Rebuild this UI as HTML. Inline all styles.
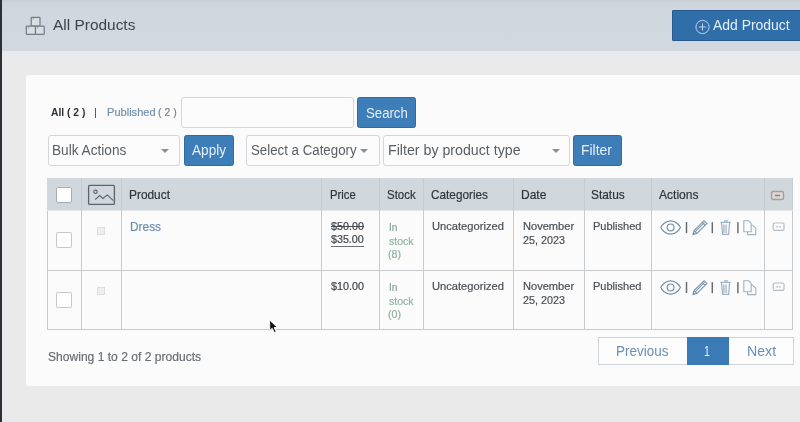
<!DOCTYPE html>
<html><head><meta charset="utf-8">
<style>
*{box-sizing:border-box;margin:0;padding:0}
html,body{width:800px;height:422px;overflow:hidden;background:#e9eae9;font-family:"Liberation Sans",sans-serif}
.a{position:absolute}
.t{position:absolute;white-space:nowrap;line-height:1;transform-origin:0 0}
#edge{left:-4px;top:-4px;width:6px;height:430px;background:#2c3034}
#hdr{left:2px;top:-4px;width:802px;height:55.4px;background:linear-gradient(#c8cdd6 0,#c8cdd6 4px,#cdd3db 6px,#d0d7de 14px,#d1d8df 55px)}
#band{left:2px;top:51.4px;width:802px;height:6.1px;background:#e7ebee}
#card{left:25.5px;top:75.3px;width:800px;height:310.4px;background:#fbfbfc;border-radius:3px}
.btn{position:absolute;background:#3d7db8;border:1px solid #336b9f;border-radius:2.5px;color:#e8f0f8}
.sel{position:absolute;background:#fcfcfc;border:1px solid #d4d6d8;border-radius:3px;color:#555b60}
.arr{position:absolute;width:0;height:0;border-left:4px solid transparent;border-right:4px solid transparent;border-top:4px solid #8a8f94}
.vl{position:absolute;width:1px;background:#c7cacd}
.hl{position:absolute;height:1px;background:#c7cacd}
.cb{position:absolute;width:16px;height:16px;background:#fff;border:1.5px solid #b9bcc0;border-radius:2px}
.th{position:absolute;font-size:12px;color:#3c434a;line-height:1}
.td{position:absolute;font-size:11.3px;color:#3f454b;line-height:14px;white-space:nowrap}
.bar{position:absolute;width:1.6px;height:11px;background:#5e6368}
</style></head><body><div id="root" style="position:absolute;left:-6px;top:-6px;width:812px;height:434px;filter:blur(0.4px)"><div style="position:absolute;left:6px;top:6px;width:800px;height:422px">
<div id="edge" class="a"></div>
<div id="hdr" class="a"></div>
<div id="band" class="a"></div>
<!-- boxes icon -->
<svg class="a" style="left:24px;top:15px" width="24" height="22" viewBox="0 0 24 22">
  <g fill="#d9dee3" stroke="#747b82" stroke-width="1.2">
    <rect x="7.2" y="2.4" width="8.8" height="8.8" rx="0.6"/>
    <rect x="2.3" y="11.2" width="9.2" height="8.2" rx="0.6"/>
    <rect x="11.5" y="11.2" width="8.7" height="8.2" rx="0.6"/>
  </g>
  <path d="M8.6 4.6 L10.2 3.2 M3.7 13.4 L5.3 12 M12.9 13.4 L14.5 12" stroke="#8a9096" stroke-width="0.9"/>
</svg>
<!-- add product button -->
<div class="a" style="left:672px;top:9.5px;width:140px;height:31px;background:#2f6ea9;border:1px solid #27598c;border-radius:1px"></div>
<svg class="a" style="left:694px;top:19px" width="17" height="17" viewBox="0 0 17 17">
  <g fill="none" stroke="#c9dcef" stroke-width="0.9"><circle cx="8.5" cy="8" r="6.6"/><path d="M8.5 4.4v7.2M4.9 8h7.2"/></g>
</svg>

<div id="card" class="a"></div>

<!-- top links -->
<div class="sel" style="left:181px;top:97px;width:173px;height:31px"></div>
<div class="btn" style="left:357px;top:97px;width:59px;height:31px"></div>

<!-- filter row -->
<div class="sel" style="left:47.5px;top:134.5px;width:132px;height:31px"></div>
<div class="arr" style="left:160.5px;top:148.5px"></div>
<div class="btn" style="left:183.5px;top:134.5px;width:50.5px;height:31px"></div>
<div class="sel" style="left:246px;top:134.5px;width:133.5px;height:31px"></div>
<div class="arr" style="left:360px;top:148.5px"></div>
<div class="sel" style="left:383px;top:134.5px;width:187px;height:31px"></div>
<div class="arr" style="left:551.5px;top:148.5px"></div>
<div class="btn" style="left:573px;top:134.5px;width:48.5px;height:31px"></div>

<!-- table -->
<div class="a" style="left:47px;top:210px;width:746px;height:120px;background:#fbfbfb;border:1px solid #c7cacd"></div>
<div class="a" style="left:47px;top:178px;width:746px;height:32.5px;background:#d1d8dd;border-bottom:1px solid #e4e8eb"></div>
<div class="hl" style="left:47px;top:270px;width:746px"></div>
<div class="vl" style="left:81px;top:210px;height:120px"></div>
<div class="vl" style="left:81px;top:178px;height:32px;background:#c6cdd2"></div>
<div class="vl" style="left:121px;top:210px;height:120px"></div>
<div class="vl" style="left:121px;top:178px;height:32px;background:#c6cdd2"></div>
<div class="vl" style="left:321px;top:210px;height:120px"></div>
<div class="vl" style="left:321px;top:178px;height:32px;background:#c6cdd2"></div>
<div class="vl" style="left:379px;top:210px;height:120px"></div>
<div class="vl" style="left:379px;top:178px;height:32px;background:#c6cdd2"></div>
<div class="vl" style="left:423px;top:210px;height:120px"></div>
<div class="vl" style="left:423px;top:178px;height:32px;background:#c6cdd2"></div>
<div class="vl" style="left:513px;top:210px;height:120px"></div>
<div class="vl" style="left:513px;top:178px;height:32px;background:#c6cdd2"></div>
<div class="vl" style="left:584px;top:210px;height:120px"></div>
<div class="vl" style="left:584px;top:178px;height:32px;background:#c6cdd2"></div>
<div class="vl" style="left:651px;top:210px;height:120px"></div>
<div class="vl" style="left:651px;top:178px;height:32px;background:#c6cdd2"></div>
<div class="vl" style="left:764px;top:210px;height:120px"></div>
<div class="vl" style="left:764px;top:178px;height:32px;background:#c6cdd2"></div>
<div class="vl" style="left:792px;top:178px;height:32px;background:#c6cdd2"></div>

<div class="cb" style="left:56.3px;top:187px;border-color:#a9adb1"></div>
<svg class="a" style="left:87px;top:184px" width="29" height="22" viewBox="0 0 29 22">
  <g fill="none" stroke="#5c636a">
    <rect x="1.6" y="1.4" width="25.8" height="19" rx="1" stroke-width="1.3"/>
    <circle cx="8.5" cy="7.8" r="1.7" stroke-width="1.1"/>
    <path d="M8 15.7 L12.9 11.6 L15.9 14.5 L20.3 10.9 L26.4 16.6" stroke-width="1.1"/>
  </g>
</svg>
<svg class="a" style="left:770px;top:190px" width="15" height="11" viewBox="0 0 15 11">
  <rect x="1.5" y="1.5" width="12" height="8" rx="1.5" fill="#ddd8d8" stroke="#a89c9c" stroke-width="1.4"/>
  <path d="M5 5.5h5" stroke="#857b7b" stroke-width="1.4"/>
</svg>

<!-- row 1 -->
<div class="cb" style="left:56.2px;top:232.3px;border-color:#c6c8ca"></div>
<div class="a" style="left:97.4px;top:227.1px;width:8px;height:7.6px;background:#eceeef;border:1px solid #dcdfe2"></div>

<svg class="a" style="left:658px;top:218.2px" width="102" height="19" viewBox="0 0 102 19">
  <g fill="none" stroke="#7390a8" stroke-width="1.2">
    <path d="M2.8 9.4 C3.4 7.6 7.2 2.8 12.6 2.8 C18 2.8 21.8 7.6 22.4 9.4 C21.8 11.2 18 16.2 12.6 16.2 C7.2 16.2 3.4 11.2 2.8 9.4Z"/>
    <circle cx="12.6" cy="9.4" r="3.4"/>
  </g>
  <path d="M28.5 4v11" stroke="#63686d" stroke-width="1.45"/>
  <g fill="none" stroke="#7d98ae" stroke-width="1.1">
    <path d="M35 16.4 L36 12.6 L46 2.7 L48.9 5.6 L38.9 15.5 Z"/>
    <path d="M36 12.6 L38.9 15.5 M44.3 4.4 L47.2 7.3 M37.3 13.6 L46.5 4.3"/>
  </g>
  <path d="M35 16.4 L35.6 14.4 L36.9 15.8 Z" fill="#6a7c8c"/>
  <path d="M54.3 4.2v11" stroke="#63686d" stroke-width="1.45"/>
  <g fill="none" stroke="#9fb1c1" stroke-width="1.2">
    <path d="M62.3 4.4 H72.7"/>
    <path d="M63.5 4.6 L64.6 16.4 H70.6 L71.6 4.6"/>
    <path d="M65.9 6.5v8.5M68.1 6.5v8.5M66 2.9h4"/>
  </g>
  <path d="M79.9 4.2v11" stroke="#63686d" stroke-width="1.45"/>
  <g fill="none" stroke="#a3b2c0" stroke-width="1.1">
    <path d="M85.8 2.8 H90.6 L93.2 5.4 V13.8 H85.8 Z"/>
    <path d="M93.2 7.2 H94.6 L97.8 10.3 V16.6 H89.6 V13.8"/>
  </g>
</svg>
<svg class="a" style="left:771px;top:222.0px" width="15" height="10" viewBox="0 0 15 10">
  <rect x="2.2" y="1" width="10.8" height="7.4" rx="1.4" fill="#fbfcfd" stroke="#b3bdc6" stroke-width="1.2"/>
  <path d="M5.2 4.7h1.8M8 4.7h1.8" stroke="#bcc5ce" stroke-width="1.5"/>
</svg>

<!-- row 2 -->
<div class="cb" style="left:56.2px;top:292.3px;border-color:#c6c8ca"></div>
<div class="a" style="left:97.4px;top:287px;width:8px;height:7.6px;background:#eceeef;border:1px solid #dcdfe2"></div>

<svg class="a" style="left:658px;top:278.2px" width="102" height="19" viewBox="0 0 102 19">
  <g fill="none" stroke="#7390a8" stroke-width="1.2">
    <path d="M2.8 9.4 C3.4 7.6 7.2 2.8 12.6 2.8 C18 2.8 21.8 7.6 22.4 9.4 C21.8 11.2 18 16.2 12.6 16.2 C7.2 16.2 3.4 11.2 2.8 9.4Z"/>
    <circle cx="12.6" cy="9.4" r="3.4"/>
  </g>
  <path d="M28.5 4v11" stroke="#63686d" stroke-width="1.45"/>
  <g fill="none" stroke="#7d98ae" stroke-width="1.1">
    <path d="M35 16.4 L36 12.6 L46 2.7 L48.9 5.6 L38.9 15.5 Z"/>
    <path d="M36 12.6 L38.9 15.5 M44.3 4.4 L47.2 7.3 M37.3 13.6 L46.5 4.3"/>
  </g>
  <path d="M35 16.4 L35.6 14.4 L36.9 15.8 Z" fill="#6a7c8c"/>
  <path d="M54.3 4.2v11" stroke="#63686d" stroke-width="1.45"/>
  <g fill="none" stroke="#9fb1c1" stroke-width="1.2">
    <path d="M62.3 4.4 H72.7"/>
    <path d="M63.5 4.6 L64.6 16.4 H70.6 L71.6 4.6"/>
    <path d="M65.9 6.5v8.5M68.1 6.5v8.5M66 2.9h4"/>
  </g>
  <path d="M79.9 4.2v11" stroke="#63686d" stroke-width="1.45"/>
  <g fill="none" stroke="#a3b2c0" stroke-width="1.1">
    <path d="M85.8 2.8 H90.6 L93.2 5.4 V13.8 H85.8 Z"/>
    <path d="M93.2 7.2 H94.6 L97.8 10.3 V16.6 H89.6 V13.8"/>
  </g>
</svg>
<svg class="a" style="left:771px;top:282.0px" width="15" height="10" viewBox="0 0 15 10">
  <rect x="2.2" y="1" width="10.8" height="7.4" rx="1.4" fill="#fbfcfd" stroke="#b3bdc6" stroke-width="1.2"/>
  <path d="M5.2 4.7h1.8M8 4.7h1.8" stroke="#bcc5ce" stroke-width="1.5"/>
</svg>

<svg class="a" style="left:267px;top:318px" width="14" height="17" viewBox="0 0 14 17">
  <path d="M2.6 2 L2.8 12.4 L5.2 10.3 L7.4 14.6 L9.2 13.7 L7.1 9.6 L10.3 9.4 Z" fill="#111" stroke="#fff" stroke-width="0.9" stroke-linejoin="round"/>
</svg>
<!-- footer -->
<div class="a" style="left:598px;top:337px;width:195.5px;height:27.6px;background:#fdfdfd;border:1px solid #cfd4d8"></div>
<div class="a" style="left:686.6px;top:337px;width:42.5px;height:27.6px;background:#3a7ab5"></div>
<div class="a" style="left:94.6px;top:107.7px;width:1.7px;height:10px;background:#575c61"></div>
<div class="a" style="left:330.7px;top:225.9px;width:33.2px;height:1px;background:#4a5055"></div>
<div class="a" style="left:330.9px;top:245.5px;width:33px;height:1px;background:#6a7075"></div>
<div class="t" style="left:52.60px;top:16.79px;font-size:15.51px;color:#3b444d;transform:scaleX(0.996);">All Products</div>
<div class="t" style="left:713.20px;top:18.00px;font-size:14.20px;color:#e4eef8;transform:scaleX(0.982);">Add Product</div>
<div class="t" style="left:51.10px;top:106.62px;font-size:11.16px;color:#2b3136;transform:scaleX(0.923);font-weight:bold">All ( 2 )</div>
<div class="t" style="left:106.50px;top:106.75px;font-size:11.01px;color:#7090ae;transform:scaleX(1.006);-webkit-text-stroke:0.2px currentColor;">Published</div>
<div class="t" style="left:158.00px;top:106.75px;font-size:11.01px;color:#7a7f85;transform:scaleX(0.953);-webkit-text-stroke:0.2px currentColor;">( 2 )</div>
<div class="t" style="left:365.80px;top:104.64px;font-size:15.22px;color:#e6eff8;transform:scaleX(0.867);">Search</div>
<div class="t" style="left:52.00px;top:142.04px;font-size:15.22px;color:#585e64;transform:scaleX(0.897);">Bulk Actions</div>
<div class="t" style="left:191.75px;top:142.68px;font-size:14.93px;color:#e6eff8;transform:scaleX(0.911);">Apply</div>
<div class="t" style="left:251.10px;top:142.04px;font-size:15.22px;color:#585e64;transform:scaleX(0.873);">Select a Category</div>
<div class="t" style="left:387.81px;top:142.06px;font-size:15.20px;color:#585e64;transform:scaleX(0.935);">Filter by product type</div>
<div class="t" style="left:581.39px;top:141.82px;font-size:15.36px;color:#e6eff8;transform:scaleX(0.906);">Filter</div>
<div class="t" style="left:129.10px;top:189.54px;font-size:11.96px;color:#30363c;transform:scaleX(0.995);-webkit-text-stroke:0.2px currentColor;">Product</div>
<div class="t" style="left:329.70px;top:189.54px;font-size:11.96px;color:#30363c;transform:scaleX(0.946);-webkit-text-stroke:0.2px currentColor;">Price</div>
<div class="t" style="left:386.60px;top:189.54px;font-size:11.96px;color:#30363c;transform:scaleX(0.959);-webkit-text-stroke:0.2px currentColor;">Stock</div>
<div class="t" style="left:430.60px;top:189.54px;font-size:11.96px;color:#30363c;transform:scaleX(0.986);-webkit-text-stroke:0.2px currentColor;">Categories</div>
<div class="t" style="left:520.50px;top:189.54px;font-size:11.96px;color:#30363c;transform:scaleX(1.006);-webkit-text-stroke:0.2px currentColor;">Date</div>
<div class="t" style="left:591.25px;top:189.54px;font-size:11.96px;color:#30363c;transform:scaleX(0.995);-webkit-text-stroke:0.2px currentColor;">Status</div>
<div class="t" style="left:658.75px;top:189.54px;font-size:11.96px;color:#30363c;transform:scaleX(1.007);-webkit-text-stroke:0.2px currentColor;">Actions</div>
<div class="t" style="left:47.80px;top:351.71px;font-size:11.88px;color:#6a6f74;transform:scaleX(1.017);-webkit-text-stroke:0.2px currentColor;">Showing 1 to 2 of 2 products</div>
<div class="t" style="left:616.02px;top:343.12px;font-size:15.36px;color:#6a8fb7;transform:scaleX(0.878);">Previous</div>
<div class="t" style="left:704.37px;top:343.76px;font-size:14.49px;color:#e6f0fa;transform:scaleX(0.729);">1</div>
<div class="t" style="left:746.52px;top:343.76px;font-size:14.49px;color:#6a8fb7;transform:scaleX(0.977);">Next</div>
<div class="t" style="left:129.80px;top:220.87px;font-size:12.46px;color:#6c8fb2;transform:scaleX(0.954);-webkit-text-stroke:0.2px currentColor;">Dress</div>
<div class="t" style="left:330.70px;top:221.56px;font-size:10.40px;color:#40464c;transform:scaleX(1.037);-webkit-text-stroke:0.2px currentColor;">$50.00</div>
<div class="t" style="left:330.90px;top:234.61px;font-size:10.40px;color:#40464c;transform:scaleX(1.031);-webkit-text-stroke:0.2px currentColor;">$35.00</div>
<div class="t" style="left:388.75px;top:221.64px;font-size:10.60px;color:#86a596;transform:scaleX(0.950);-webkit-text-stroke:0.2px currentColor;">In</div>
<div class="t" style="left:388.75px;top:235.79px;font-size:10.60px;color:#8fb3a0;transform:scaleX(0.993);-webkit-text-stroke:0.2px currentColor;">stock</div>
<div class="t" style="left:388.20px;top:249.14px;font-size:10.60px;color:#8fb09f;transform:scaleX(1.006);-webkit-text-stroke:0.2px currentColor;">(8)</div>
<div class="t" style="left:432.30px;top:221.24px;font-size:10.60px;color:#4a5056;transform:scaleX(1.052);-webkit-text-stroke:0.2px currentColor;">Uncategorized</div>
<div class="t" style="left:522.90px;top:221.44px;font-size:10.60px;color:#4a5056;transform:scaleX(1.046);-webkit-text-stroke:0.2px currentColor;">November</div>
<div class="t" style="left:522.90px;top:235.44px;font-size:10.60px;color:#4a5056;transform:scaleX(1.016);-webkit-text-stroke:0.2px currentColor;">25, 2023</div>
<div class="t" style="left:593.40px;top:221.44px;font-size:10.60px;color:#4a5056;transform:scaleX(1.040);-webkit-text-stroke:0.2px currentColor;">Published</div>
<div class="t" style="left:331.25px;top:281.56px;font-size:10.40px;color:#40464c;transform:scaleX(1.036);-webkit-text-stroke:0.2px currentColor;">$10.00</div>
<div class="t" style="left:388.75px;top:281.64px;font-size:10.60px;color:#86a596;transform:scaleX(0.950);-webkit-text-stroke:0.2px currentColor;">In</div>
<div class="t" style="left:388.75px;top:295.79px;font-size:10.60px;color:#8fb3a0;transform:scaleX(0.993);-webkit-text-stroke:0.2px currentColor;">stock</div>
<div class="t" style="left:388.20px;top:309.14px;font-size:10.60px;color:#8fb09f;transform:scaleX(1.006);-webkit-text-stroke:0.2px currentColor;">(0)</div>
<div class="t" style="left:432.30px;top:281.24px;font-size:10.60px;color:#4a5056;transform:scaleX(1.052);-webkit-text-stroke:0.2px currentColor;">Uncategorized</div>
<div class="t" style="left:522.90px;top:281.44px;font-size:10.60px;color:#4a5056;transform:scaleX(1.046);-webkit-text-stroke:0.2px currentColor;">November</div>
<div class="t" style="left:522.90px;top:295.44px;font-size:10.60px;color:#4a5056;transform:scaleX(1.016);-webkit-text-stroke:0.2px currentColor;">25, 2023</div>
<div class="t" style="left:593.40px;top:281.44px;font-size:10.60px;color:#4a5056;transform:scaleX(1.040);-webkit-text-stroke:0.2px currentColor;">Published</div>
</div></div></body></html>
